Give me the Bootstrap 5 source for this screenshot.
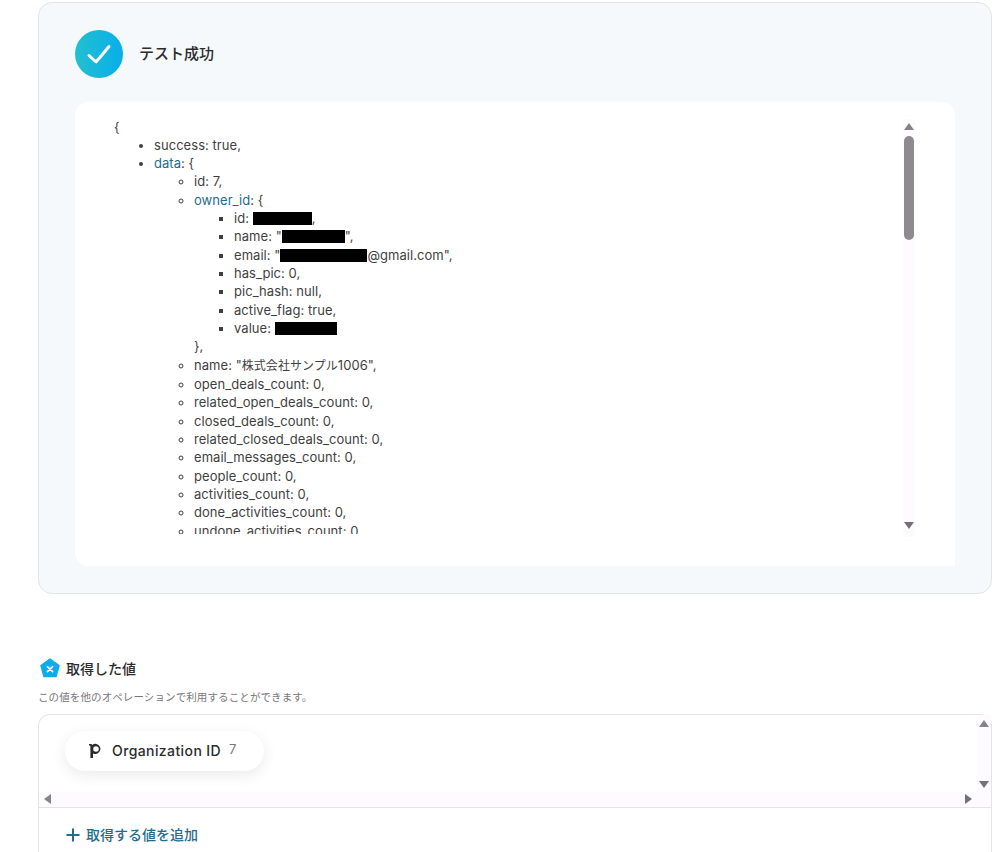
<!DOCTYPE html>
<html lang="ja">
<head>
<meta charset="utf-8">
<title>テスト成功</title>
<link href="https://cdn.jsdelivr.net/npm/bootstrap@5.3.0/dist/css/bootstrap.min.css" rel="stylesheet">
<style>
html,body{height:852px;overflow:hidden;background:#fff}
body{font-family:Inter,"Noto Sans CJK JP",sans-serif;color:#3f3f41;font-size:13px}
.page-wrap{padding:2px 11px 0 38px;width:1003px}
.result-panel{height:592px;background:#f5f9fc;border:1px solid #e2e4e8;border-radius:14px;padding:27px 36px 27px 36px}
.check-disc{width:48px;height:48px;border-radius:50%;background:linear-gradient(90deg,#22c0cf,#08aeea)}
.panel-title{font-size:15px;font-weight:500;color:#2b2b2d;margin-left:16px}
.json-box{height:464px;margin-top:24px;background:#fff;border-radius:14px 14px 0 14px;padding:9px 40px 0 39px}
.json-clip{height:423px;overflow:hidden;flex:1 1 auto;line-height:18.33px;letter-spacing:.05px;padding-top:8px}
.json-open{line-height:16.8px}
.json-clip ul{margin:0;padding-left:40px}
.json-clip ul.lv1{list-style:disc}
.json-clip ul.lv2{list-style:circle}
.json-clip ul.lv3{list-style:square}
.json-key{color:#1f6c8c}
.cjk-run{font-size:12px}
.blackout{display:inline-block;background:#000;height:13px;vertical-align:-2px}
.bo-id{width:59px}
.bo-name{width:63px}
.bo-mail{width:87px}
.bo-value{width:62px}
.bar-track{width:12px;height:418px;background:#fdfbff;flex:none;margin-top:8px}
.bar-thumb{width:10px;height:104px;margin:6px auto 0;border-radius:5px;background:#8d8b8f}
.tri-up{width:0;height:0;border-left:5px solid transparent;border-right:5px solid transparent;border-bottom:7px solid #858387;margin:0 auto}
.tri-dn{width:0;height:0;border-left:5px solid transparent;border-right:5px solid transparent;border-top:7px solid #747276;margin:0 auto}
.tri-lf{width:0;height:0;border-top:5px solid transparent;border-bottom:5px solid transparent;border-right:7px solid #858387}
.tri-rt{width:0;height:0;border-top:5px solid transparent;border-bottom:5px solid transparent;border-left:7px solid #747276}
.values-head{margin-top:63px;height:22px;font-size:14px;font-weight:500;color:#2b2b2d}
.values-head svg{margin-right:5px}
.values-note{font-size:10.5px;color:#77777b;margin-top:12px;line-height:14px;letter-spacing:.01em}
.values-box{margin-top:9px;border:1px solid #e2e4e8;border-bottom:0;border-radius:12px 12px 0 0;height:140px;background:#fff}
.values-scroll{height:93px;border-bottom:1px solid #e2e4e8}
.values-main{flex:1 1 auto;min-width:0;height:77px;padding:16px 0 0 26px}
.value-pill{height:40px;padding:0 28px 2px 24px;border-radius:20px;background:#fff;box-shadow:0 4px 14px rgba(60,60,90,.11)}
.value-name{font-size:14px;font-weight:500;color:#2b2b2d;margin-left:10px;letter-spacing:.4px}
.value-num{color:#77777b;margin-left:8px}
.vbar{width:14px;height:77px;background:#fdfbff;padding:5px 0 0;flex:none}
.hbar{height:15px;background:#fdfbff;padding:0 19px 2px 5px}
.add-row{padding:18px 0 0 27px;font-size:14px;font-weight:500;color:#1f6c8c;line-height:18px}
.add-row svg{margin-right:6px}
</style>
</head>
<body>
<div class="page-wrap">
  <section class="result-panel">
    <div class="d-flex align-items-center">
      <div class="check-disc d-flex align-items-center justify-content-center">
        <svg width="26" height="22" viewBox="0 0 26 22" fill="none"><path d="M3 12.5 L10 19 L23 3.5" stroke="#fff" stroke-width="3" stroke-linecap="round" stroke-linejoin="round"/></svg>
      </div>
      <div class="panel-title">テスト成功</div>
    </div>
    <div class="json-box d-flex">
      <div class="json-clip">
        <div class="json-open">{</div>
        <ul class="lv1">
          <li>success: true,</li>
          <li><span class="json-key">data</span>: {
            <ul class="lv2">
              <li>id: 7,</li>
              <li><span class="json-key">owner_id</span>: {
                <ul class="lv3">
                  <li>id: <span class="blackout bo-id"></span>,</li>
                  <li>name: "<span class="blackout bo-name"></span>",</li>
                  <li>email: "<span class="blackout bo-mail"></span>@gmail.com",</li>
                  <li>has_pic: 0,</li>
                  <li>pic_hash: null,</li>
                  <li>active_flag: true,</li>
                  <li>value: <span class="blackout bo-value"></span></li>
                </ul>
                },
              </li>
              <li>name: "<span class="cjk-run">株式会社サンプル</span>1006",</li>
              <li>open_deals_count: 0,</li>
              <li>related_open_deals_count: 0,</li>
              <li>closed_deals_count: 0,</li>
              <li>related_closed_deals_count: 0,</li>
              <li>email_messages_count: 0,</li>
              <li>people_count: 0,</li>
              <li>activities_count: 0,</li>
              <li>done_activities_count: 0,</li>
              <li>undone_activities_count: 0</li>
            </ul>
          </li>
        </ul>
      </div>
      <div class="bar-track d-flex flex-column">
        <div class="tri-up mt-1"></div>
        <div class="bar-thumb"></div>
        <div class="tri-dn mt-auto mb-2"></div>
      </div>
    </div>
  </section>

  <div class="values-head d-flex align-items-center">
    <svg width="23" height="22" viewBox="0 0 23 22"><path d="M12 2 L21 8.5 L18 19.5 H6 L3 8.5 Z" fill="#08aeea" stroke="#08aeea" stroke-width="1.5" stroke-linejoin="round"/><path d="M9.4 9.6 L14.6 14.6 M14.6 9.6 L9.4 14.6" stroke="#fff" stroke-width="1.7" stroke-linecap="round"/></svg>
    取得した値
  </div>
  <div class="values-note">この値を他のオペレーションで利用することができます。</div>
  <div class="values-box">
    <div class="values-scroll">
      <div class="d-flex">
        <div class="values-main">
          <div class="value-pill d-inline-flex align-items-center">
            <svg width="13" height="15" viewBox="0 0 13 15"><path d="M0 1 H2.6 L3.2 2 A5 5 0 1 1 4 10.4 V15 H1.4 V3.2 Q1.4 2.6 .8 2.6 H0 Z M7 3.2 A2.8 2.8 0 1 0 7 8.8 A2.8 2.8 0 1 0 7 3.2 Z" fill="#2b2b2d" fill-rule="evenodd"/></svg>
            <span class="value-name">Organization ID</span>
            <span class="value-num">7</span>
          </div>
        </div>
        <div class="vbar d-flex flex-column">
          <div class="tri-up"></div>
          <div class="tri-dn mt-auto mb-1"></div>
        </div>
      </div>
      <div class="hbar d-flex justify-content-between align-items-center">
        <div class="tri-lf"></div>
        <div class="tri-rt"></div>
      </div>
    </div>
    <div class="add-row d-flex align-items-center">
      <svg width="14" height="14" viewBox="0 0 14 14"><path d="M7 .5 V13.5 M.5 7 H13.5" stroke="#1f6c8c" stroke-width="2"/></svg>
      取得する値を追加
    </div>
  </div>
</div>
</body>
</html>
